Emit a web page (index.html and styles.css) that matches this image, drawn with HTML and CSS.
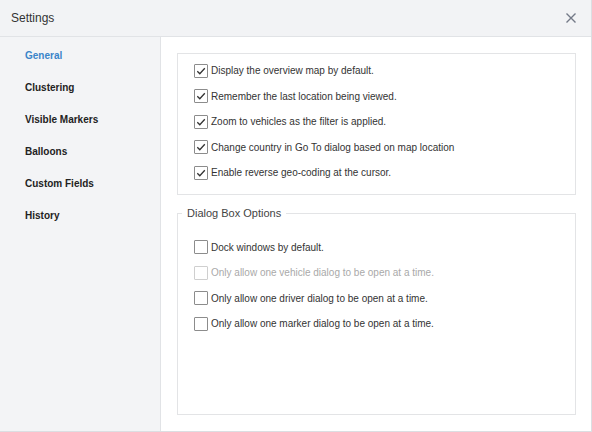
FILE: index.html
```
<html>
<head>
<link rel="stylesheet" href="styles.css">
</head>
<body>
<div class="window">
  <div class="header">
    <span class="title">Settings</span>
    <button class="close" aria-label="Close">
      <svg width="10" height="10" viewBox="0 0 10 10"><path d="M0.5 0.5L9.5 9.5M9.5 0.5L0.5 9.5" stroke="#737987" stroke-width="1.4" fill="none"/></svg>
    </button>
  </div>
  <div class="main">
    <ul class="nav">
      <li class="active">General</li>
      <li>Clustering</li>
      <li>Visible Markers</li>
      <li>Balloons</li>
      <li>Custom Fields</li>
      <li>History</li>
    </ul>
    <div class="content">
      <div class="group">
        <label class="option"><span class="check on"></span>Display the overview map by default.</label>
        <label class="option"><span class="check on"></span>Remember the last location being viewed.</label>
        <label class="option"><span class="check on"></span>Zoom to vehicles as the filter is applied.</label>
        <label class="option"><span class="check on"></span>Change country in Go To dialog based on map location</label>
        <label class="option"><span class="check on"></span>Enable reverse geo-coding at the cursor.</label>
      </div>
      <fieldset class="group dialogs">
        <legend>Dialog Box Options</legend>
        <label class="option"><span class="check"></span>Dock windows by default.</label>
        <label class="option disabled"><span class="check"></span>Only allow one vehicle dialog to be open at a time.</label>
        <label class="option"><span class="check"></span>Only allow one driver dialog to be open at a time.</label>
        <label class="option"><span class="check"></span>Only allow one marker dialog to be open at a time.</label>
      </fieldset>
    </div>
  </div>
</div>
</body>
</html>
```

FILE: styles.css
```
body {
  margin: 0;
  padding: 0;
  background: #fff;
  font-family: 'Liberation Sans', Arial, sans-serif;
}

.window {
  width: 592px;
  height: 432px;
  box-sizing: border-box;
  border-right: 1px solid #dcdee2;
  border-bottom: 1px solid #dcdee2;
  display: flex;
  flex-direction: column;
}

.header {
  height: 36px;
  flex: none;
  background: #f2f3f5;
  border-bottom: 1px solid #e1e3e6;
  display: flex;
  align-items: center;
  justify-content: space-between;
  padding: 0 12px 0 11px;
}

.title {
  font-size: 12px;
  color: #333;
}

.close {
  border: 0;
  background: none;
  padding: 0;
  width: 16px;
  height: 16px;
  display: flex;
  align-items: center;
  justify-content: center;
}

.main {
  flex: 1;
  display: flex;
  min-height: 0;
}

.nav {
  width: 160px;
  flex: none;
  margin: 0;
  padding: 3px 0 0 0;
  list-style: none;
  background: #f3f4f6;
  border-right: 1px solid #e1e3e6;
}

.nav li {
  height: 32px;
  line-height: 32px;
  padding-left: 25px;
  font-size: 10px;
  font-weight: bold;
  color: #222;
}

.nav li.active {
  color: #3a84c9;
}

.content {
  flex: 1;
  display: flex;
  flex-direction: column;
  gap: 12px;
  padding: 16px 15px 16px 16px;
}

.group {
  border: 1px solid #e3e4e6;
  margin: 0;
  padding: 6.5px 16px 11.5px 16px;
  display: flex;
  flex-direction: column;
  gap: 5.5px;
}

.dialogs {
  flex: 1;
  min-width: 0;
  padding-top: 18px;
}

.dialogs legend {
  font-size: 11px;
  color: #444;
  padding: 0 5px;
  margin-left: -12px;
  line-height: 12px;
}

.option {
  height: 20px;
  display: flex;
  align-items: center;
  font-size: 10px;
  color: #333;
}

.option.disabled {
  color: #a9a9a9;
}

.check {
  width: 14px;
  height: 14px;
  box-sizing: border-box;
  border: 1px solid #8c8c8c;
  border-radius: 1px;
  background: #fff;
  margin-right: 3px;
  flex: none;
}

.option.disabled .check {
  border-color: #cfcfcf;
}

.check.on {
  background: #fff url("data:image/svg+xml;utf8,<svg xmlns='http://www.w3.org/2000/svg' width='12' height='12' viewBox='0 0 12 12'><path d='M2.3 6.2L4.8 8.7L9.8 3.2' stroke='%23333' stroke-width='1.3' fill='none'/></svg>") no-repeat center;
}
```
